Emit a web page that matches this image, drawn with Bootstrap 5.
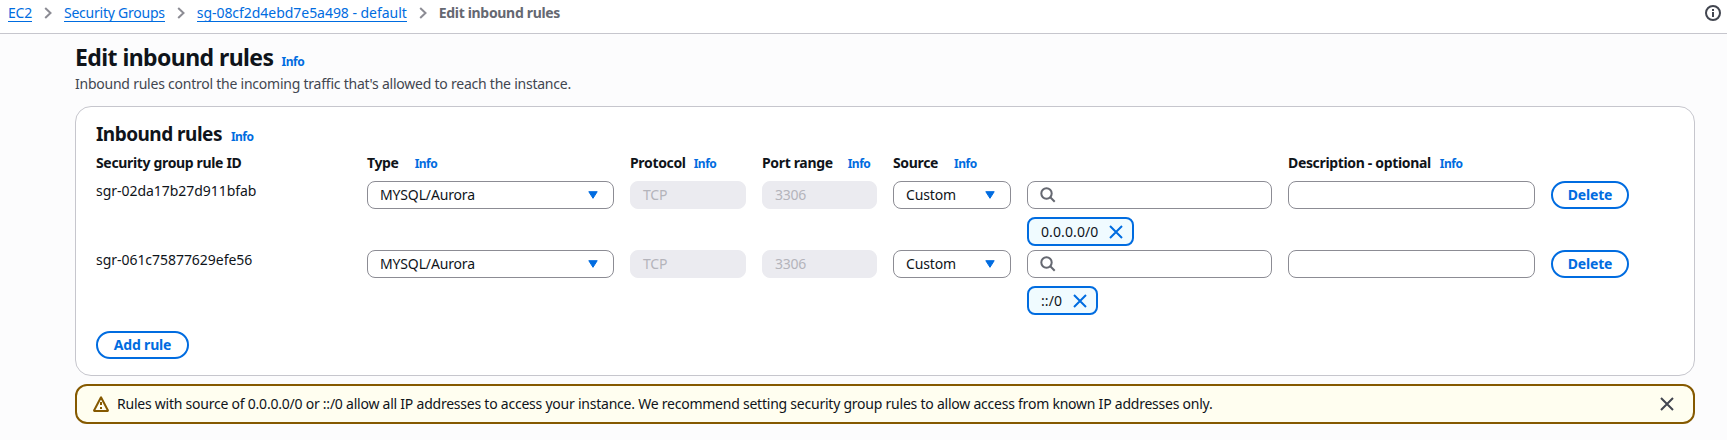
<!DOCTYPE html>
<html lang="en">
<head>
<meta charset="utf-8">
<meta name="viewport" content="width=device-width, initial-scale=1">
<title>Edit inbound rules</title>
<link href="https://cdn.jsdelivr.net/npm/bootstrap@5.3.0/dist/css/bootstrap.min.css" rel="stylesheet">
<style>
  :root { --link: #006ce0; --ink: #0f141a; --line: #c6c6cd; --field: #8c8c94; }
  body { font: 400 14px/20px "Noto Sans", sans-serif; letter-spacing: -.235px; color: var(--ink); background: #fcfcfd; height: 440px; overflow: hidden; }
  a { color: var(--link); }
  svg { display: block; flex: none; }
  .topbar { height: 34px; padding: 0 6px 7px 8px; border-bottom: 1px solid var(--line); }
  .topbar a { text-decoration: none; line-height: 17px; height: 18px; margin-bottom: 1px; border-bottom: 1px solid var(--link); }
  .crumb-now { color: #656871; font-weight: 700; letter-spacing: -.32px; line-height: 17px; margin-bottom: 2px; }
  .chev { margin: 0 12px; }
  .page { padding: 8px 32px 0 75px; }
  h1 { font-size: 23px; line-height: 30px; font-weight: 700; letter-spacing: -.57px; }
  h2 { font-size: 19px; line-height: 24px; font-weight: 700; letter-spacing: -.52px; }
  .info { font-size: 12px; font-weight: 700; letter-spacing: -.5px; text-decoration: none; }
  .sub { color: #424650; line-height: 20px; margin-top: 2px; }
  .panel { height: 270px; margin-top: 12px; padding: 15px 20px; border: 1px solid var(--line); border-radius: 16px; background: #fff; }
  .rules { display: grid; grid-template-columns: 255px 247px 116px 115px 118px 245px 247px 78px; column-gap: 16px; }
  .heads { font-weight: 700; letter-spacing: -.34px; height: 22px; margin-top: 5px; line-height: 22px; white-space: nowrap; }
  .rule-row { height: 69px; }
  .rid { letter-spacing: -.04px; }
  .field { height: 28px; border: 1px solid var(--field); border-radius: 8px; padding: 0 12px; }
  .field.off { background: #ebebf0; border-color: #ebebf0; color: #b4b4bb; }
  .pick { padding-right: 15px; letter-spacing: -.15px; }
  .chip { height: 29px; margin-top: 8px; border: 2px solid var(--link); border-radius: 8px; background: #f0fbff; padding: 0 9px 0 12px; gap: 11px; letter-spacing: .1px; }
  .btn-pill { height: 28px; padding: 0; border: 2px solid var(--link); border-radius: 20px; color: var(--link); background: #fff; font-weight: 700; font-size: 14px; line-height: 24px; letter-spacing: -.2px; }
  .notice { height: 40px; margin-top: 8px; padding: 0 19px 0 16px; border: 2px solid #855900; border-radius: 12px; background: #fffef0; letter-spacing: -.232px; }
</style>
</head>
<body>
<header class="topbar bg-white d-flex align-items-center">
  <a href="#">EC2</a>
  <svg class="chev" width="8" height="12" viewBox="0 0 8 12"><path d="M1.2 1l5.3 5-5.3 5" fill="none" stroke="#8c8c94" stroke-width="2"/></svg>
  <a href="#">Security Groups</a>
  <svg class="chev" width="8" height="12" viewBox="0 0 8 12"><path d="M1.2 1l5.3 5-5.3 5" fill="none" stroke="#8c8c94" stroke-width="2"/></svg>
  <a href="#" style="letter-spacing:-.04px">sg-08cf2d4ebd7e5a498 - default</a>
  <svg class="chev" width="8" height="12" viewBox="0 0 8 12"><path d="M1.2 1l5.3 5-5.3 5" fill="none" stroke="#8c8c94" stroke-width="2"/></svg>
  <span class="crumb-now">Edit inbound rules</span>
  <svg class="ms-auto" width="16" height="16" viewBox="0 0 16 16"><circle cx="8" cy="8" r="7" fill="none" stroke="#424650" stroke-width="2"/><path d="M7 4h2v2H7zM7 7h2v5H7z" fill="#424650"/></svg>
</header>
<main class="page">
  <div class="d-flex align-items-baseline">
    <h1 class="mb-0">Edit inbound rules</h1><a class="info" href="#" style="margin-left:8px">Info</a>
  </div>
  <div class="sub">Inbound rules control the incoming traffic that's allowed to reach the instance.</div>
  <section class="panel">
    <div class="d-flex align-items-baseline">
      <h2 class="mb-0">Inbound rules</h2><a class="info" href="#" style="margin-left:9px">Info</a>
    </div>
    <div class="rules heads">
      <div>Security group rule ID</div>
      <div>Type<a class="info" href="#" style="margin-left:16px">Info</a></div>
      <div>Protocol<a class="info" href="#" style="margin-left:8px">Info</a></div>
      <div>Port range<a class="info" href="#" style="margin-left:15px">Info</a></div>
      <div>Source<a class="info" href="#" style="margin-left:16px">Info</a></div>
      <div></div>
      <div>Description - optional<a class="info" href="#" style="margin-left:9px">Info</a></div>
      <div></div>
    </div>
    <div id="ruleList" style="margin-top:7px"></div>
    <button class="btn btn-pill" style="width:93px;margin-top:12px">Add rule</button>
  </section>
  <div class="notice d-flex align-items-center">
    <svg width="16" height="16" viewBox="0 0 16 16"><path d="M8 1.3 1.2 14.2a.5.5 0 0 0 .5.8h12.6a.5.5 0 0 0 .5-.8z" fill="none" stroke="#855900" stroke-width="2" stroke-linejoin="round"/><path d="M7 6h2v3H7zM7 11h2v2H7z" fill="#855900"/></svg>
    <span style="margin-left:8px">Rules with source of 0.0.0.0/0 or ::/0 allow all IP addresses to access your instance. We recommend setting security group rules to allow access from known IP addresses only.</span>
    <svg class="ms-auto" width="14" height="14" viewBox="0 0 14 14"><path d="M1 1l12 12M13 1 1 13" stroke="#424650" stroke-width="2"/></svg>
  </div>
</main>
<script src="https://cdn.jsdelivr.net/npm/bootstrap@5.3.0/dist/js/bootstrap.bundle.min.js"></script>
<script>
  const caret = '<svg class="ms-auto" width="10" height="8" viewBox="0 0 10 8"><path d="M.8.7h8.4L5 7.3z" fill="#006ce0" stroke="#006ce0" stroke-linejoin="round"/></svg>';
  const rows = [['sgr-02da17b27d911bfab', '0.0.0.0/0'], ['sgr-061c75877629efe56', '::/0']];
  document.getElementById('ruleList').innerHTML = rows.map(([id, cidr]) => `
    <div class="rules rule-row">
      <div><span class="rid">${id}</span></div>
      <div class="field pick d-flex align-items-center"><span>MYSQL/Aurora</span>${caret}</div>
      <div class="field off d-flex align-items-center"><span>TCP</span></div>
      <div class="field off d-flex align-items-center"><span>3306</span></div>
      <div class="field pick d-flex align-items-center"><span>Custom</span>${caret}</div>
      <div>
        <div class="field d-flex align-items-center"><svg width="16" height="16" viewBox="0 0 16 16"><circle cx="6.5" cy="6.5" r="5.2" fill="none" stroke="#656871" stroke-width="2"/><path d="M10.3 10.3l4.4 4.4" stroke="#656871" stroke-width="2"/></svg></div>
        <div class="chip d-inline-flex align-items-center"><span>${cidr}</span><svg width="14" height="14" viewBox="0 0 14 14"><path d="M1 1l12 12M13 1 1 13" stroke="#006ce0" stroke-width="2"/></svg></div>
      </div>
      <div class="field"></div>
      <button class="btn btn-pill">Delete</button>
    </div>`).join('');
</script>
</body>
</html>
